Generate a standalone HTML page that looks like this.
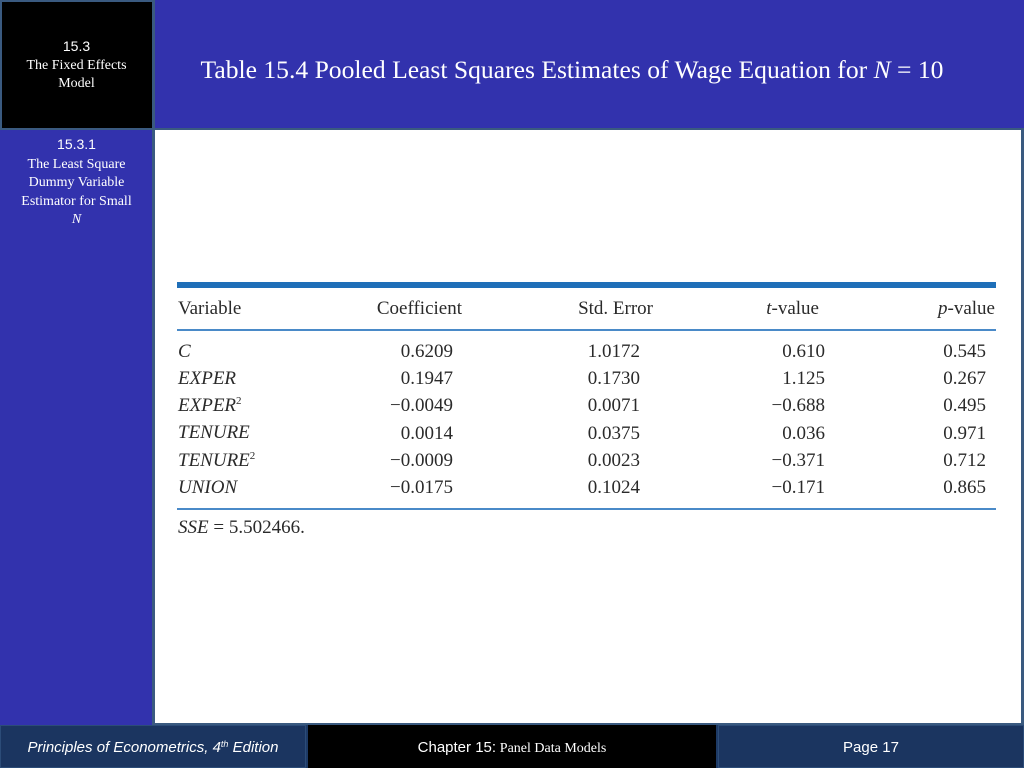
<!DOCTYPE html>
<html><head><meta charset="utf-8"><style>
*{margin:0;padding:0;box-sizing:border-box}
body{width:1024px;height:768px;position:relative;background:#1d3a66;overflow:hidden;font-family:"Liberation Serif",serif}
.a{position:absolute}
.t{position:absolute;font-size:19px;line-height:20px;color:#2a2a2a;white-space:nowrap}
.r{text-align:right}
i{font-style:italic}
sup{font-size:11px;vertical-align:7px;line-height:0}
</style></head><body>
<div class="a" style="left:0;top:0;width:1024px;height:725px;background:#3a5a80"></div>
<div class="a" style="left:2;top:2px;left:2px;width:150px;height:126px;background:#000"></div>
<div class="a" style="left:155px;top:0;width:869px;height:128px;background:#3232ad"></div>
<div class="a" style="left:0;top:130px;width:152px;height:595px;background:#3232ad"></div>
<div class="a" style="left:155px;top:130px;width:866px;height:593px;background:#fff"></div>

<div class="a" style="left:0;top:37px;width:153px;text-align:center;color:#fff;font-size:14px;line-height:18px"><span style="font-family:'Liberation Sans',sans-serif">15.3</span><br>The Fixed Effects<br>Model</div>
<div class="a" style="left:0;top:135px;width:153px;text-align:center;color:#fff;font-size:14px;line-height:18.5px"><span style="font-family:'Liberation Sans',sans-serif">15.3.1</span><br>The Least Square<br>Dummy Variable<br>Estimator for Small<br><i>N</i></div>
<div class="a" style="left:155px;top:55px;width:834px;text-align:center;color:#fff;font-size:25.6px;line-height:30px">Table 15.4 Pooled Least Squares Estimates of Wage Equation for <i>N</i> = 10</div>

<div class="a" style="left:177px;top:282px;width:819px;height:6px;background:#1f6fb8"></div>
<div class="a" style="left:177px;top:329px;width:819px;height:2px;background:#4a8ac8"></div>
<div class="a" style="left:177px;top:508px;width:819px;height:2px;background:#4a8ac8"></div>

<div class="t" style="left:178px;top:299px">Variable</div>
<div class="t r" style="right:562px;top:299px">Coefficient</div>
<div class="t r" style="right:371px;top:299px">Std. Error</div>
<div class="t r" style="right:205px;top:299px"><i>t</i>-value</div>
<div class="t r" style="right:29px;top:299px"><i>p</i>-value</div>

<div class="t" style="left:178px;top:342px"><i>C</i></div>
<div class="t" style="left:178px;top:369px"><i>EXPER</i></div>
<div class="t" style="left:178px;top:396px"><i>EXPER</i><sup>2</sup></div>
<div class="t" style="left:178px;top:423px"><i>TENURE</i></div>
<div class="t" style="left:178px;top:451px"><i>TENURE</i><sup>2</sup></div>
<div class="t" style="left:178px;top:478px"><i>UNION</i></div>

<div class="t r" style="right:571px;top:338px;line-height:27.2px">0.6209<br>0.1947<br>&minus;0.0049<br>0.0014<br>&minus;0.0009<br>&minus;0.0175</div>
<div class="t r" style="right:384px;top:338px;line-height:27.2px">1.0172<br>0.1730<br>0.0071<br>0.0375<br>0.0023<br>0.1024</div>
<div class="t r" style="right:199px;top:338px;line-height:27.2px">0.610<br>1.125<br>&minus;0.688<br>0.036<br>&minus;0.371<br>&minus;0.171</div>
<div class="t r" style="right:38px;top:338px;line-height:27.2px">0.545<br>0.267<br>0.495<br>0.971<br>0.712<br>0.865</div>
<div class="t" style="left:178px;top:518px"><i>SSE</i> = 5.502466.</div>

<div class="a" style="left:0;top:725px;width:306px;height:43px;background:#1b3560;border:1px solid #2c4c78"></div>
<div class="a" style="left:308px;top:725px;width:408px;height:43px;background:#000"></div>
<div class="a" style="left:718px;top:725px;width:306px;height:43px;background:#1b3560;border:1px solid #2c4c78"></div>
<div class="a" style="left:0;top:739px;width:306px;text-align:center;color:#fff;font-size:15px;font-family:'Liberation Sans',sans-serif;font-style:italic">Principles of Econometrics, 4<sup style="font-size:9px;vertical-align:5px">th</sup> Edition</div>
<div class="a" style="left:308px;top:739px;width:408px;text-align:center;color:#fff;font-size:15px"><span style="font-family:'Liberation Sans',sans-serif">Chapter 15:</span> <span style="font-size:14px">Panel Data Models</span></div>
<div class="a" style="left:718px;top:739px;width:306px;text-align:center;color:#fff;font-size:15px;font-family:'Liberation Sans',sans-serif">Page 17</div>
</body></html>
